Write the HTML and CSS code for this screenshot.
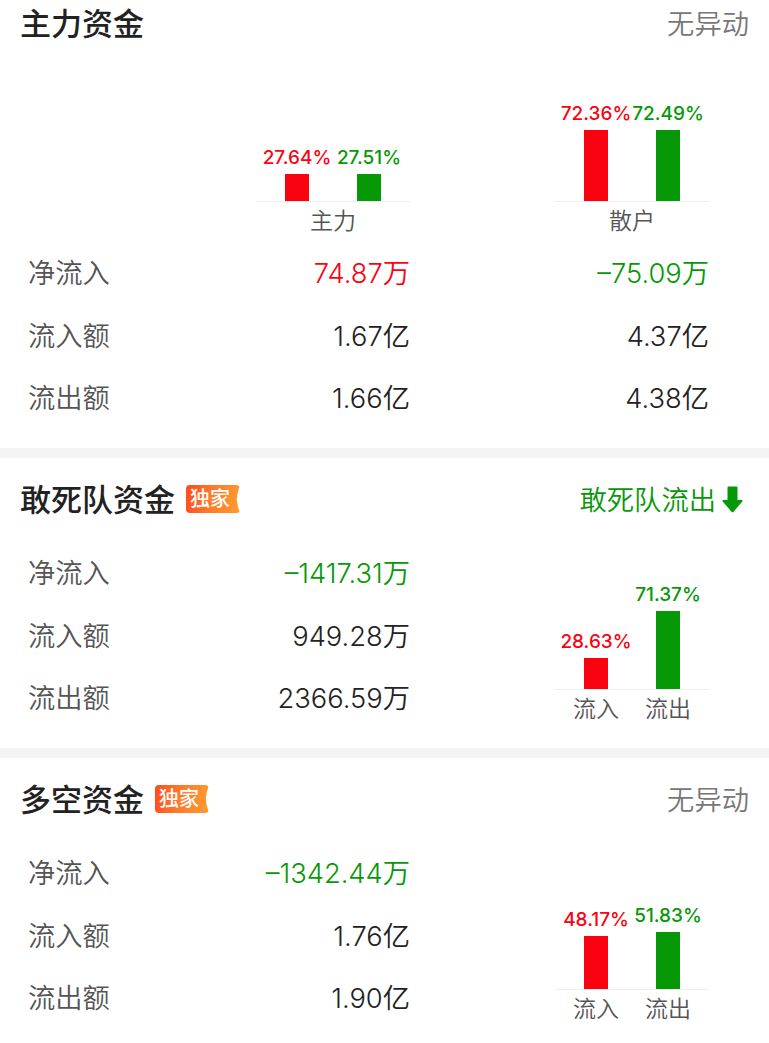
FILE: index.html
```html
<!DOCTYPE html>
<html lang="zh-CN">
<head>
    <meta charset="UTF-8">
    <meta name="viewport" content="width=device-width, initial-scale=1.0">
    <title>主力资金</title>
    <link rel="stylesheet" href="styles.css">
</head>
<body>

    <!-- 主力资金 -->
    <section class="section first">
        <div class="head">
            <h2>主力资金</h2>
            <span class="status">无异动</span>
        </div>
        <div class="charts">
            <div class="chart">
                <div class="bars">
                    <div class="col red"><span>27.64%</span><div class="bar" style="height: 27px"></div></div>
                    <div class="col green"><span>27.51%</span><div class="bar" style="height: 27px"></div></div>
                </div>
                <div class="names"><span>主力</span></div>
            </div>
            <div class="chart">
                <div class="bars">
                    <div class="col red"><span>72.36%</span><div class="bar" style="height: 71px"></div></div>
                    <div class="col green"><span>72.49%</span><div class="bar" style="height: 71px"></div></div>
                </div>
                <div class="names"><span>散户</span></div>
            </div>
        </div>
        <div class="row"><span class="label">净流入</span><span class="value red">74.87万</span><span class="value green">–75.09万</span></div>
        <div class="row"><span class="label">流入额</span><span class="value">1.67亿</span><span class="value">4.37亿</span></div>
        <div class="row"><span class="label">流出额</span><span class="value">1.66亿</span><span class="value">4.38亿</span></div>
    </section>

    <!-- 敢死队资金 -->
    <section class="section">
        <div class="head">
            <h2>敢死队资金</h2>
            <span class="badge">独家</span>
            <span class="status green">敢死队流出<svg class="arrow" width="21" height="27" viewBox="0 0 21 27"><path d="M6.500 .5h8a1 1 0 0 1 1 1V14h4.200c.9 0 1.200.8.6 1.400l-9 10.600c-.5.6-1.100.6-1.600 0l-9-10.600C.1 14.800.4 14 1.300 14h4.200V1.500a1 1 0 0 1 1-1z" fill="currentColor"/></svg></span>
        </div>
        <div class="body">
            <div class="rows">
                <div class="row"><span class="label">净流入</span><span class="value green">–1417.31万</span></div>
                <div class="row"><span class="label">流入额</span><span class="value">949.28万</span></div>
                <div class="row"><span class="label">流出额</span><span class="value">2366.59万</span></div>
            </div>
            <div class="chart">
                <div class="bars">
                    <div class="col red"><span>28.63%</span><div class="bar" style="height: 31px"></div></div>
                    <div class="col green"><span>71.37%</span><div class="bar" style="height: 78px"></div></div>
                </div>
                <div class="names"><span>流入</span><span>流出</span></div>
            </div>
        </div>
    </section>

    <!-- 多空资金 -->
    <section class="section">
        <div class="head">
            <h2>多空资金</h2>
            <span class="badge">独家</span>
            <span class="status">无异动</span>
        </div>
        <div class="body">
            <div class="rows">
                <div class="row"><span class="label">净流入</span><span class="value green">–1342.44万</span></div>
                <div class="row"><span class="label">流入额</span><span class="value">1.76亿</span></div>
                <div class="row"><span class="label">流出额</span><span class="value">1.90亿</span></div>
            </div>
            <div class="chart">
                <div class="bars">
                    <div class="col red"><span>48.17%</span><div class="bar" style="height: 53px"></div></div>
                    <div class="col green"><span>51.83%</span><div class="bar" style="height: 57px"></div></div>
                </div>
                <div class="names"><span>流入</span><span>流出</span></div>
            </div>
        </div>
    </section>

</body>
</html>
```
FILE: styles.css
```css
* {
    box-sizing: border-box;
}

body {
    margin: 0;
    background-color: #fff;
    color: #222;
    font-family: Inter, "Noto Sans CJK SC", sans-serif;
    overflow: hidden;
}

.section {
    height: 300px;
    border-top: 10px solid #f4f4f4;
}

.section.first {
    height: 448px;
    border-top: none;
}

.head {
    display: flex;
    align-items: center;
    height: 84px;
    padding: 0 20px;
}

.first .head {
    height: 48px;
}

h2 {
    margin: 0;
    font-size: 31px;
    font-weight: 500;
    line-height: 40px;
}

.status {
    display: flex;
    align-items: center;
    margin-left: auto;
    padding-top: 2px;
    color: #777;
    font-size: 27.3px;
    font-weight: 350;
    line-height: 40px;
}

.arrow {
    margin: -4px 6px 0 6px;
}

.badge {
    width: 54px;
    height: 28px;
    margin: -2px 0 0 11px;
    padding-left: 4px;
    border-radius: 4px;
    background: linear-gradient(100deg, #ff4a1c, #ff7a2a 45%, #ff9c30);
    clip-path: polygon(0 0, 100% 0, 96% 25%, 94% 50%, 96% 75%, 100% 100%, 0 100%);
    color: #fff;
    font-size: 20px;
    font-weight: 500;
    line-height: 29px;
}

.body {
    display: flex;
    align-items: flex-end;
    gap: 145px;
}

.rows {
    width: 410px;
}

.row {
    display: flex;
    align-items: center;
    height: 62.5px;
    padding: 2px 0 0 28px;
    font-size: 27.3px;
    line-height: 40px;
}

.label {
    width: 83px;
    color: #555;
    font-weight: 350;
}

.value {
    width: 299px;
    font-weight: 350;
    text-align: right;
}

.red {
    color: #fb0210;
}

.green {
    color: #079807;
}

.charts {
    display: flex;
    align-items: flex-end;
    gap: 145px;
    height: 194px;
    padding-left: 256px;
}

.chart {
    width: 154px;
    padding-bottom: 2px;
}

.bars {
    display: flex;
    justify-content: center;
    align-items: flex-end;
    border-bottom: 1px solid #eee;
}

.col {
    display: flex;
    flex-direction: column;
    align-items: center;
    width: 72px;
    font-size: 19px;
    font-weight: 500;
    line-height: 24px;
    white-space: nowrap;
}

.bar {
    width: 24px;
    margin-top: 4px;
    background-color: currentColor;
}

.names {
    display: flex;
    justify-content: center;
    color: #555;
    font-size: 23px;
    font-weight: 350;
    line-height: 38px;
}

.names span {
    width: 72px;
    text-align: center;
}
```
